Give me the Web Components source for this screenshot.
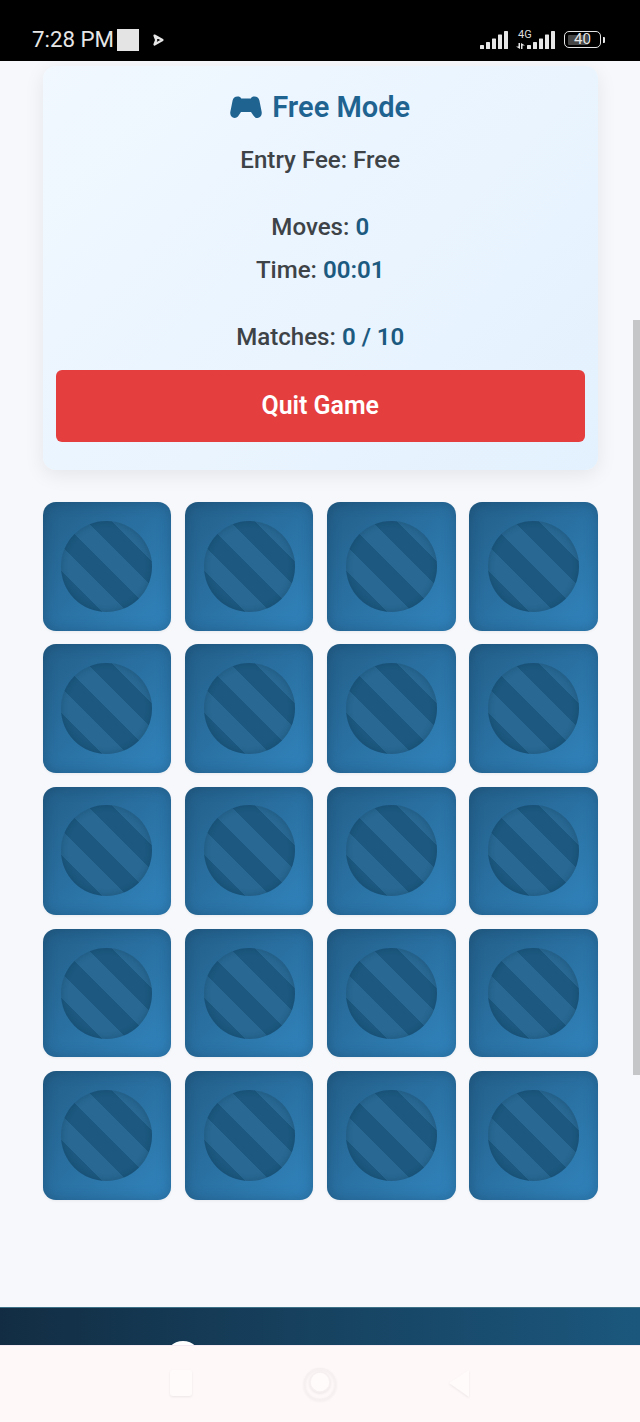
<!DOCTYPE html>
<html><head><meta charset="utf-8"><style>
html,body{margin:0;padding:0;background:#f6f8fb}
body{width:640px;height:1422px;overflow:hidden;font-family:Roboto,sans-serif}
</style></head><body>
<phone-screen>
  <status-bar slot="status"></status-bar>
  <game-panel slot="main">
    <span slot="title">Free Mode</span>
    <span slot="fee">Entry Fee: Free</span>
    <stat-line slot="moves" label="Moves:" value="0"></stat-line>
    <stat-line slot="time" label="Time:" value="00:01"></stat-line>
    <stat-line slot="matches" label="Matches:" value="0 / 10"></stat-line>
    <span slot="action">Quit Game</span>
  </game-panel>
  <card-grid slot="main" count="20"></card-grid>
  <site-footer slot="footer"></site-footer>
  <nav-bar slot="nav"></nav-bar>
</phone-screen>
<script>
function def(name, html, init){
  customElements.define(name, class extends HTMLElement{
    constructor(){super();this.attachShadow({mode:'open'}).innerHTML=html;}
    connectedCallback(){ if(init) init.call(this); }
  });
}
def('phone-screen',`<style>
:host{display:flex;flex-direction:column;width:640px;height:1422px;position:relative;overflow:hidden;background:#f6f8fb}
.main{flex:1;display:flex;flex-direction:column;padding:5px 42px 0 42.5px;min-height:0}
.scroll{position:absolute;left:633px;top:320px;width:7px;height:755px;background:#c4c6c8}
</style>
<slot name="status"></slot>
<div class="main"><slot name="main"></slot></div>
<slot name="footer"></slot>
<slot name="nav"></slot>
<div class="scroll"></div>`);

def('status-bar',`<style>
:host{display:flex;align-items:center;height:61px;background:#000;color:#e6e6e6;flex:none;box-sizing:border-box;padding:18px 0 0 32px;position:relative}
.t{font:400 22.3px/1 Roboto,sans-serif;width:85px;white-space:nowrap}
.sq{width:22px;height:22px;background:#e4e4e4}
.arrow{margin-left:14px}
.r{margin-left:auto;display:flex;align-items:center;margin-right:35px}
.g{position:absolute;left:518px;top:28.5px;font:400 11px/1 Roboto,sans-serif;color:#ddd}
.bat{position:relative;width:37px;height:17px;border:1.5px solid #e6e6e6;border-radius:5px;margin-left:9px;box-sizing:border-box;overflow:hidden}
.bat i{position:absolute;left:2.5px;top:2.5px;bottom:2.5px;width:20px;background:#454545;border-radius:1px}
.bat b{position:absolute;inset:0;text-align:center;font:400 15px/14px Roboto,sans-serif;color:#e6e6e6}
.nub{width:2.5px;height:6px;background:#e6e6e6;margin-left:1.5px;border-radius:0 1px 1px 0}
</style>
<span class="t">7:28 PM</span><span class="sq"></span>
<svg class="arrow" width="11" height="12" viewBox="0 0 11 12"><path d="M1.500 1.500 9.500 6 1.500 10.500 3.200 6Z" fill="none" stroke="#e6e6e6" stroke-width="2.200" stroke-linejoin="round"/></svg>
<div class="r">
<svg width="28" height="18" viewBox="0 0 28 18" fill="#e6e6e6"><rect x="0" y="14" width="4" height="4" rx=".6"/><rect x="6" y="11" width="4" height="7" rx=".6"/><rect x="12" y="7.500" width="4" height="10.500" rx=".6"/><rect x="18" y="3.500" width="4" height="14.500" rx=".6"/><rect x="24" y="0" width="4" height="18" rx=".6"/></svg>
<svg style="margin-left:8px" width="39" height="18" viewBox="0 0 39 18" fill="#e6e6e6"><path d="M2.500 12H4v6L0 15.500h2.500zM5 12l4 2.500H6.500V18H5z"/><rect x="11" y="14" width="4" height="4" rx=".6"/><rect x="17" y="11" width="4" height="7" rx=".6"/><rect x="23" y="7.500" width="4" height="10.500" rx=".6"/><rect x="29" y="3.500" width="4" height="14.500" rx=".6"/><rect x="35" y="0" width="4" height="18" rx=".6"/></svg>
<div class="bat"><i></i><b>40</b></div><div class="nub"></div>
</div>
<span class="g">4G</span>`);

def('stat-line',`<style>
:host{display:block;text-align:center;font:500 24.1px/26px Roboto,sans-serif;color:#3d4347}
b{font-weight:600;color:#1c5a80}
</style><span id="l"></span> <b id="v"></b>`,function(){
  this.shadowRoot.getElementById('l').textContent=this.getAttribute('label');
  this.shadowRoot.getElementById('v').textContent=this.getAttribute('value');
});

def('game-panel',`<style>
:host{display:flex;flex-direction:column;align-items:stretch;height:404px;box-sizing:border-box;flex:none;
 background:linear-gradient(135deg,#f1f8ff,#e3f1fe);border-radius:13px;padding:24px 13px 28px;
 box-shadow:0 5px 20px rgba(0,0,0,.08)}
h2{margin:0;display:flex;justify-content:center;align-items:center;gap:10px;font:600 29px/34px Roboto,sans-serif;color:#1f6391;height:34px}
.fee{text-align:center;font:500 24.1px/26px Roboto,sans-serif;color:#3d4347;margin-top:23px}
.m{margin-top:41px}.t{margin-top:17px}.x{margin-top:41px}
button{all:unset;display:block;box-sizing:border-box;height:72px;margin-top:20px;background:#e53e3e;color:#fff;border-radius:6px;text-align:center;font:600 24.9px/70px Roboto,sans-serif}
</style>
<h2><svg width="32" height="23" viewBox="0 0 32 23"><path fill="#1f6391" d="M7.500 .5C9.500 .5 10.500 1 11.200 2.400H20.800C21.500 1 22.500 .5 24.500 .5 27 .5 28.800 2 29.400 4.500L31.600 15.500C32.400 19.500 30.200 22 27.500 22 25.500 22 24.300 21 23.200 19.300L21 16H11L8.800 19.300C7.700 21 6.500 22 4.500 22 1.800 22-.4 19.500.4 15.500L2.600 4.500C3.200 2 5 .5 7.500 .5Z"/></svg><slot name="title"></slot></h2>
<div class="fee"><slot name="fee"></slot></div>
<div class="m"><slot name="moves"></slot></div>
<div class="t"><slot name="time"></slot></div>
<div class="x"><slot name="matches"></slot></div>
<button><slot name="action"></slot></button>`);

def('memory-card',`<style>
:host{display:flex;align-items:center;justify-content:center;aspect-ratio:1;border-radius:13px;
 background:linear-gradient(135deg,#235f89,#3184bd);box-shadow:inset 0 0 14px rgba(15,50,80,.35),0 1px 3px rgba(0,0,0,.06)}
.c{width:91px;height:91px;border-radius:50%;
 background:repeating-linear-gradient(45deg,#286892 0 11.75px,#1c587f 11.75px 29.45px,#286892 29.45px 35.4px);
 box-shadow:inset 0 0 6px rgba(10,45,75,.3)}
</style><div class="c"></div>`);

def('card-grid',`<style>
:host{display:grid;grid-template-columns:repeat(4,128.6px);gap:13.7px;justify-content:start;margin-top:32px}
</style><slot></slot>`,function(){
  const n=+this.getAttribute('count');
  if(!this.children.length) for(let i=0;i<n;i++) this.appendChild(document.createElement('memory-card'));
});

def('site-footer',`<style>
:host{display:block;position:relative;height:38px;flex:none;overflow:hidden;border-top:1px solid #3c7188;box-sizing:border-box;
 background:linear-gradient(90deg,#122d43,#1b577d)}
i{position:absolute;left:165px;top:33px;width:36px;height:36px;border-radius:50%;background:#fff}
</style><i></i>`);

def('nav-bar',`<style>
:host{display:flex;align-items:center;justify-content:center;height:77px;flex:none;background:#fff8f8;position:relative;box-shadow:inset 0 1px 0 #f5eaf2;box-sizing:border-box;gap:110px}
svg{display:block;filter:drop-shadow(0 1px 1px rgba(0,0,0,.07))}
</style>
<svg width="24" height="30" viewBox="0 0 24 30"><rect x="1" y="1" width="22" height="26" rx="3" fill="#fffbfb"/></svg>
<svg width="34" height="34" viewBox="0 0 34 34" fill="none" stroke="#f7f0f0" stroke-width="1.500"><circle cx="17" cy="17" r="15.500"/><circle cx="17" cy="15" r="10" fill="#fffbfb"/></svg>
<svg width="24" height="30" viewBox="0 0 24 30"><path d="M22 1V28L2 14Z" fill="#fffbfb"/></svg>`);
</script>
</body></html>
